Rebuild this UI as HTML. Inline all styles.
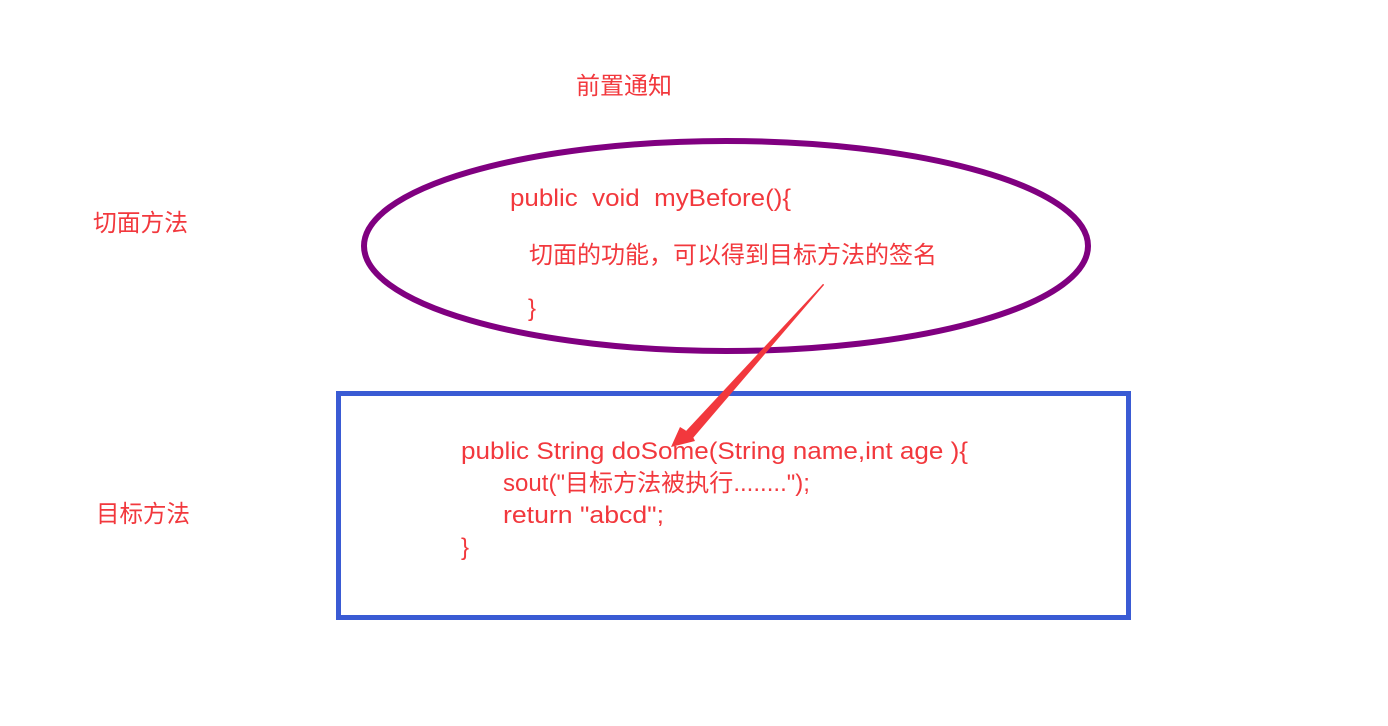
<!DOCTYPE html>
<html><head><meta charset="utf-8"><style>
html,body{margin:0;padding:0;background:#fff;width:1388px;height:726px;overflow:hidden}
svg{display:block}
text{font-family:"Liberation Sans","Noto Sans CJK SC",sans-serif;fill:#f2383d;font-size:24px;white-space:pre}
</style></head><body>
<svg width="1388" height="726" viewBox="0 0 1388 726" xml:space="preserve">
<text x="576" y="94" textLength="96" lengthAdjust="spacingAndGlyphs">前置通知</text>
<text x="93" y="231" textLength="95" lengthAdjust="spacingAndGlyphs">切面方法</text>
<text x="96" y="522" textLength="94" lengthAdjust="spacingAndGlyphs">目标方法</text>
<ellipse cx="726" cy="246" rx="362" ry="105" fill="none" stroke="#800080" stroke-width="6"/>
<text x="510" y="206" textLength="281" lengthAdjust="spacingAndGlyphs">public  void  myBefore(){</text>
<text x="529" y="263" textLength="408" lengthAdjust="spacingAndGlyphs">切面的功能，可以得到目标方法的签名</text>
<text x="528" y="316">}</text>
<rect x="338.5" y="393.5" width="790" height="224" fill="none" stroke="#3a5bd4" stroke-width="5"/>
<text x="461" y="459" textLength="507" lengthAdjust="spacingAndGlyphs">public String doSome(String name,int age ){</text>
<text x="503" y="491" textLength="307" lengthAdjust="spacingAndGlyphs">sout("目标方法被执行........");</text>
<text x="503" y="523" textLength="161" lengthAdjust="spacingAndGlyphs">return "abcd";</text>
<text x="461" y="555">}</text>
<polygon points="823,284 690,434 685,430 680,427 671,447 695,441 693,437 690,434 824,284" fill="#f2383d"/>
<polygon points="823,284 824,285 693,438 686,431" fill="#f2383d"/>
</svg>
</body></html>
